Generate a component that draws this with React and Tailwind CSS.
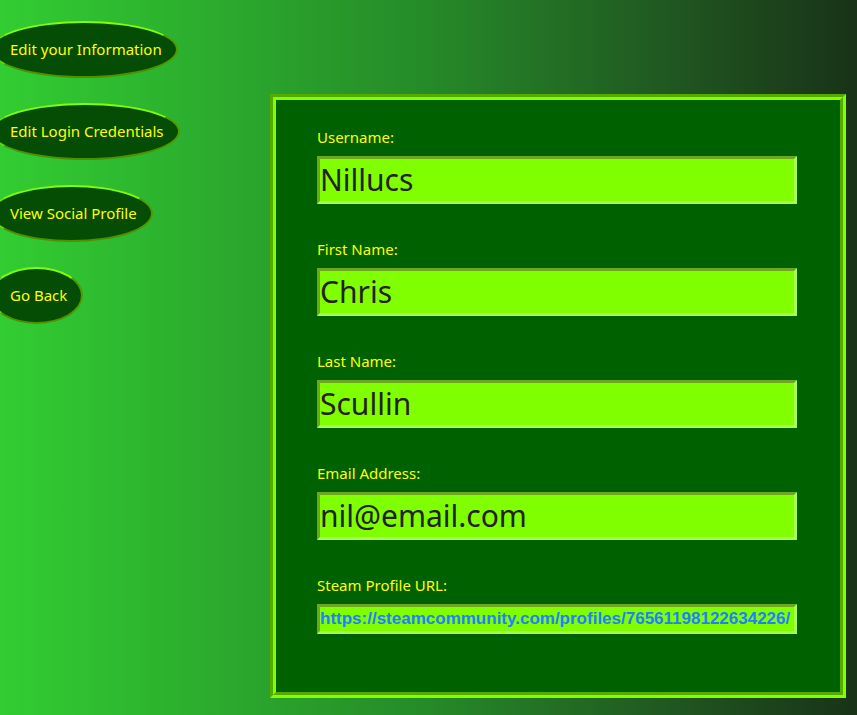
export default function App() {
  const menu = ["Edit your Information", "Edit Login Credentials", "View Social Profile", "Go Back"];

  const fields = [
    { label: "Username:", value: "Nillucs" },
    { label: "First Name:", value: "Chris" },
    { label: "Last Name:", value: "Scullin" },
    { label: "Email Address:", value: "nil@email.com" },
  ];

  return (
    <div
      className="w-full min-h-[715px] flex bg-gradient-to-r from-[#32cd32] via-[#258a28] to-[#183318] overflow-hidden"
      style={{ fontFamily: '"Noto Sans", "Open Sans", sans-serif' }}
    >
      {/* Menu */}
      <div className="w-[270px] shrink-0 flex flex-col items-start gap-[25px] pt-[21px]">
        {menu.map((m) => (
          <button
            key={m}
            className="-ml-[10px] h-[57px] pl-[18px] pr-[14px] rounded-[50%] bg-[#054d05] text-[#ffff00] text-[15px] border-2 border-t-[#80ff00] border-l-[#6ad800] border-r-[#4f9a00] border-b-[#4f9000] whitespace-nowrap"
          >
            {m}
          </button>
        ))}
      </div>

      {/* Panel */}
      <div className="mt-[94px] w-[576px] h-[604px] border-[6px] [border-style:groove] border-[#7fff00] bg-[#006100] pl-[41px] pt-[27px]">
        {fields.map((f) => (
          <div key={f.label} className="mb-[35px]">
            <div className="text-[#ffff00] text-[15px] leading-[20px]">{f.label}</div>
            <div className="mt-[9px] w-[480px] h-[48px] border-[3px] border-t-[#6ea61e] border-l-[#6ea61e] border-b-[#a6ff4d] border-r-[#a6ff4d] bg-[#80ff00] pl-0 text-[30px] leading-[42px] text-[#222222]">
              {f.value}
            </div>
          </div>
        ))}
        <div>
          <div className="text-[#ffff00] text-[15px] leading-[20px]">Steam Profile URL:</div>
          <div
            className="mt-[9px] w-[480px] h-[30px] border-[3px] border-t-[#6ea61e] border-l-[#6ea61e] border-b-[#a6ff4d] border-r-[#a6ff4d] bg-[#80ff00] pl-0 text-[17px] leading-[24px] font-bold text-[#1e7fff] whitespace-nowrap overflow-hidden"
            style={{ fontFamily: '"Liberation Sans", Arial, sans-serif' }}
          >
            https://steamcommunity.com/profiles/76561198122634226/
          </div>
        </div>
      </div>
    </div>
  );
}
